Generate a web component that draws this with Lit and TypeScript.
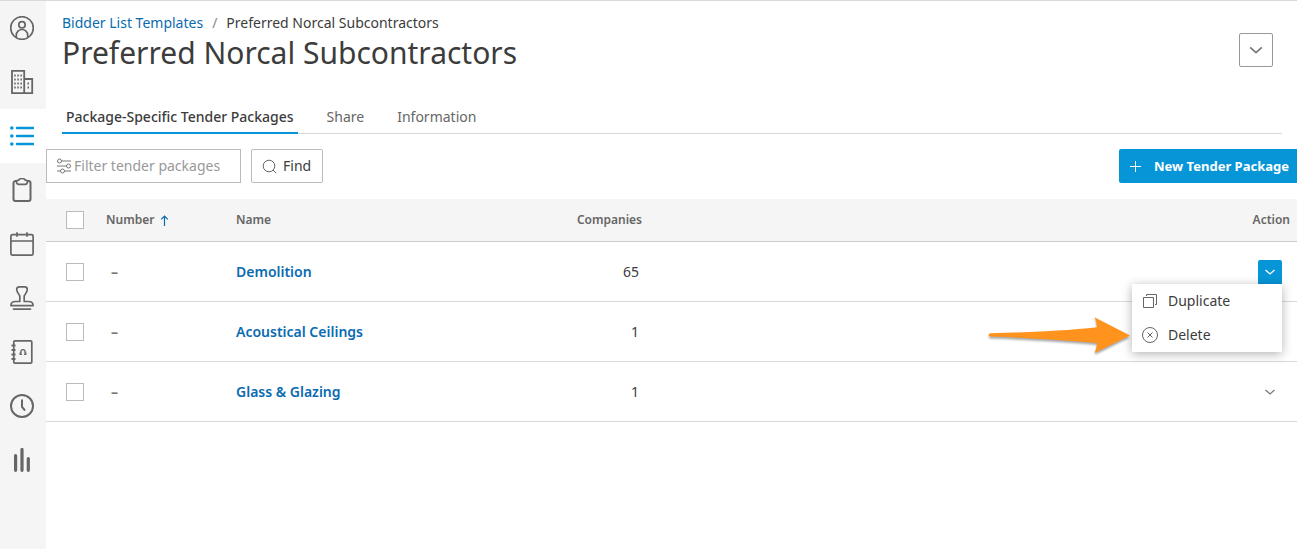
import { LitElement, html, css, svg, nothing } from "lit";
import { customElement, property, state } from "lit/decorators.js";
import { classMap } from "lit/directives/class-map.js";

interface TenderPackage {
  number: string;
  name: string;
  companies: number;
}

const navItems = [
  {
    label: "Account",
    icon: svg`<circle cx="12" cy="12" r="11.3"/><circle cx="12" cy="8.8" r="3.2"/><path d="M6.3 21.5v-2.3a5.7 5.7 0 0 1 11.4 0v2.3"/>`,
  },
  {
    label: "Companies",
    icon: svg`<path d="M2 .8h12.2v22.4H2zM14.2 9h8v14.2h-8" stroke-width="1.8"/><path d="M4.200 5.500h1.500M7.300 5.500h1.500M10.400 5.500h1.500M4.200 9.500h1.500M7.300 9.500h1.500M10.400 9.500h1.500M4.200 13.500h1.500M7.300 13.500h1.500M10.400 13.500h1.500M4.200 17.500h1.500M7.300 17.500h1.500M10.400 17.500h1.500M17.500 13.500H19M17.500 17.500H19" stroke-width="1.800"/>`,
  },
  {
    label: "Bidder lists",
    icon: svg`<path d="M7 4h16M7 12h16M7 20h16" stroke-width="2.600" stroke-linecap="round"/><g fill="currentColor" stroke="none"><circle cx="1.8" cy="4" r="1.800"/><circle cx="1.8" cy="12" r="1.800"/><circle cx="1.8" cy="20" r="1.800"/></g>`,
  },
  {
    label: "Projects",
    icon: svg`<path d="M7 3H5.500a2 2 0 0 0-2 2v16a2 2 0 0 0 2 2h13a2 2 0 0 0 2-2V5a2 2 0 0 0-2-2H17" stroke-width="2"/><path d="M6.500 3.800c0-1.200 1-1.600 2.200-1.600C9.500.6 10.500.5 12 .5s2.500.1 3.300 1.700c1.200 0 2.200.4 2.200 1.600 0 1.600-.8 2.500-2.300 2.500H8.800c-1.500 0-2.300-.9-2.300-2.500z"/>`,
  },
  {
    label: "Calendar",
    icon: svg`<rect x=".9" y="2.600" width="22.200" height="20.500" rx="1.500"/><path d="M1 9h22M7 .3v4.500M17 .3v4.500"/>`,
  },
  {
    label: "Approvals",
    icon: svg`<path d="M9.800 15.500V10C8.500 7.600 6.700 5.500 6.700 3.400c0-1.700 1.200-2.500 2.600-2.500h5.400c1.400 0 2.600.8 2.600 2.500 0 2.100-1.800 4.200-3.100 6.600v5.500h4.300c3 0 4.600 1.500 4.600 4.100H.9c0-2.600 1.600-4.100 4.600-4.100z" stroke-linejoin="round"/><path d="M3.500 23.100h17" stroke-linecap="round"/>`,
  },
  {
    label: "Contacts",
    icon: svg`<rect x="3.800" y=".9" width="18" height="22.200" rx="1"/><path d="M1.500 5.500h4M1.500 10h4M1.500 14.500h4M1.500 19h4" stroke-width="2"/><path d="M11.200 13c-1.800-4.500 5.400-4.500 3.600 0M9.600 14.200h2.400M14 14.200h2.400M10.200 14v-1.600M15.800 14v-1.600" stroke-width="1.400"/>`,
  },
  {
    label: "History",
    icon: svg`<circle cx="12" cy="12" r="11" stroke-width="2"/><path d="M12 5.500V13l3 3.500" stroke-width="2"/>`,
  },
  {
    label: "Reports",
    icon: svg`<path d="M5.600 7.500v14.800M12 1.500v20.800M18.300 10.500v11.800" stroke-width="3.200" stroke-linecap="round"/>`,
  },
];

const chevron = (size: number) => html`<svg width=${size} height=${size} viewBox="0 0 14 14" fill="none" stroke="currentColor" stroke-width="1.300" aria-hidden="true">
  <path d="M2.500 5 7 9l4.500-4"/>
</svg>`;

@customElement("side-nav")
class SideNav extends LitElement {
  @property() current = "";

  static styles = css`
    :host {
      display: block;
      background: #f5f5f5;
    }
    .item {
      display: flex;
      align-items: center;
      height: 54px;
      padding-left: 10px;
      color: #666;
    }
    .active {
      background: #fff;
      color: #0696d7;
    }
  `;

  render() {
    return html`<nav aria-label="Main">
      ${navItems.map(
        (item) => html`<a href="#" class=${classMap({ item: true, active: item.label === this.current })} aria-label=${item.label}>
          <svg width="24" height="24" viewBox="0 0 24 24" fill="none" stroke="currentColor" stroke-width="1.700" aria-hidden="true">${item.icon}</svg>
        </a>`
      )}
    </nav>`;
  }
}

@customElement("action-menu")
class ActionMenu extends LitElement {
  @property({ type: Boolean }) open = false;

  static styles = css`
    :host {
      display: inline-block;
      position: relative;
      vertical-align: middle;
    }
    .toggle {
      display: grid;
      place-items: center;
      width: 24px;
      height: 24px;
      padding: 0;
      border: 0;
      border-radius: 2px;
      background: none;
      color: #777;
    }
    .toggle.open {
      border-radius: 2px 2px 0 0;
      background: #0696d7;
      color: #fff;
    }
    .menu {
      position: absolute;
      z-index: 2;
      top: 100%;
      right: 0;
      width: 150px;
      background: #fff;
      box-shadow: 0 2px 10px rgba(0, 0, 0, 0.3);
    }
    .option {
      display: flex;
      align-items: center;
      gap: 10px;
      width: 100%;
      height: 34px;
      padding: 0 10px;
      border: 0;
      background: none;
      color: #3c3c3c;
      font: inherit;
    }
    .option-icon {
      color: #666;
    }
    .arrow {
      position: absolute;
      top: 31px;
      right: 100%;
      width: 146px;
      height: 40px;
      filter: drop-shadow(0 2px 1px rgba(0, 0, 0, 0.35));
    }
  `;

  render() {
    return html`<button
        class=${classMap({ toggle: true, open: this.open })}
        aria-label="Package actions"
        aria-expanded=${this.open}
        @click=${() => (this.open = !this.open)}
      >
        ${chevron(14)}
      </button>
      ${this.open
        ? html`<div class="menu">
            <button class="option">
              <svg class="option-icon" width="16" height="16" viewBox="0 0 16 16" fill="none" stroke="currentColor" aria-hidden="true">
                <path d="M1.500 4.500h10v10h-10zM4.500 3V1.500h10v10H13"/>
              </svg>
              Duplicate
            </button>
            <button class="option">
              <svg class="option-icon" width="16" height="16" viewBox="0 0 16 16" fill="none" stroke="currentColor" aria-hidden="true">
                <circle cx="8" cy="8" r="7.500"/><path d="m5.500 5.500 5 5M10.500 5.500l-5 5"/>
              </svg>
              Delete
            </button>
            <svg class="arrow" viewBox="0 0 146 40" fill="#ff931e" aria-hidden="true">
              <path d="M4 18.200C40 17.600 82 15.500 111 12.200Q111 7 108.500 2.200L144 20.500 108.500 38Q111 33 111 28C82 25.500 42 22.800 4 21.600Q1 20 4 18.200z"/>
            </svg>
          </div>`
        : nothing}`;
  }
}

@customElement("app-root")
class AppRoot extends LitElement {
  @state() private tab = "Package-Specific Tender Packages";

  private tabs = ["Package-Specific Tender Packages", "Share", "Information"];

  private packages: TenderPackage[] = [
    { number: "–", name: "Demolition", companies: 65 },
    { number: "–", name: "Acoustical Ceilings", companies: 1 },
    { number: "–", name: "Glass & Glazing", companies: 1 },
  ];

  static styles = css`
    :host {
      display: grid;
      grid-template-columns: 46px minmax(0, 1fr);
      box-sizing: border-box;
      min-height: 100vh;
      border-top: 1px solid #d9d9d9;
      background: #fff;
      color: #3c3c3c;
      font: 14px/20px "Noto Sans", "Open Sans", sans-serif;
    }
    a {
      color: #0a6bb0;
      text-decoration: none;
    }
    button,
    input {
      font: inherit;
    }
    .header {
      display: flex;
      justify-content: space-between;
      align-items: center;
      padding: 12px 24px 0 16px;
    }
    .crumbs {
      display: flex;
      gap: 9px;
    }
    .slash {
      color: #888;
    }
    .title {
      margin: 0;
      font-size: 30px;
      font-weight: 400;
      line-height: 40px;
    }
    .more {
      display: grid;
      place-items: center;
      width: 34px;
      height: 34px;
      margin-top: 14px;
      padding: 0;
      border: 1px solid #999;
      border-radius: 2px;
      background: #fff;
      color: #777;
    }
    .tabs {
      display: flex;
      gap: 25px;
      margin: 27px 15px 0 16px;
      border-bottom: 1px solid #d9d9d9;
    }
    .tab {
      height: 34px;
      margin-bottom: -1px;
      padding: 2px 4px 0;
      border: 0;
      border-bottom: 2px solid transparent;
      background: none;
      color: #666;
    }
    .tab.selected {
      border-bottom-color: #0696d7;
      color: #3c3c3c;
      font-weight: 550;
    }
    .toolbar {
      display: flex;
      gap: 10px;
      padding: 15px 0 16px;
    }
    .filter {
      display: flex;
      align-items: center;
      gap: 3px;
      box-sizing: border-box;
      width: 195px;
      height: 34px;
      padding: 0 10px;
      border: 1px solid #bbb;
      color: #777;
    }
    .filter-input {
      flex: 1;
      min-width: 0;
      padding: 0;
      border: 0;
      outline: 0;
      background: none;
      color: #3c3c3c;
    }
    .filter-input::placeholder {
      color: #999;
    }
    .button {
      display: flex;
      align-items: center;
      height: 34px;
      border-radius: 2px;
    }
    .find {
      gap: 6px;
      padding: 0 11px 0 10px;
      border: 1px solid #bbb;
      background: #fff;
      color: #3c3c3c;
    }
    .find-icon {
      color: #666;
    }
    .create {
      gap: 12px;
      margin-left: auto;
      padding: 0 8px 0 10px;
      border: 0;
      border-radius: 2px 0 0 2px;
      background: #0696d7;
      color: #fff;
      font-size: 13px;
      font-weight: 700;
    }
    .packages {
      width: 100%;
      table-layout: fixed;
      border-collapse: separate;
      border-spacing: 0;
    }
    .packages th,
    .packages td {
      box-sizing: border-box;
      padding: 0;
      text-align: left;
    }
    .packages th {
      height: 43px;
      border-bottom: 1px solid #ccc;
      background: #f5f5f5;
      color: #666;
      font-size: 12px;
      font-weight: 600;
    }
    .packages td {
      height: 60px;
      border-bottom: 1px solid #d9d9d9;
    }
    .packages .col-check {
      width: 60px;
      padding-left: 20px;
    }
    .packages .col-number {
      width: 130px;
    }
    .packages td.col-number {
      padding-left: 5px;
      color: #777;
      font-weight: 700;
    }
    .packages .col-name {
      width: 250px;
    }
    .packages .col-companies {
      width: 156px;
      padding-right: 3px;
      text-align: right;
    }
    .packages th.col-companies {
      padding-right: 0;
    }
    .packages .col-action {
      padding-right: 15px;
      text-align: right;
    }
    .packages th.col-action {
      padding-right: 7px;
    }
    .check {
      display: block;
      appearance: none;
      width: 18px;
      height: 18px;
      margin: 0;
      border: 1px solid #bbb;
      background: #fff;
    }
    .sort {
      display: flex;
      align-items: center;
      gap: 6px;
      padding: 0;
      border: 0;
      background: none;
      color: inherit;
    }
    .sort-icon {
      color: #0a6bb0;
    }
    .name {
      font-weight: 600;
    }
  `;

  render() {
    return html`
      <side-nav current="Bidder lists"></side-nav>
      <main>
        <header class="header">
          <div>
            <nav class="crumbs" aria-label="Breadcrumb">
              <a href="#">Bidder List Templates</a>
              <span class="slash">/</span>
              <span>Preferred Norcal Subcontractors</span>
            </nav>
            <h1 class="title">Preferred Norcal Subcontractors</h1>
          </div>
          <button class="more" aria-label="More actions">${chevron(18)}</button>
        </header>
        <div class="tabs" role="tablist">
          ${this.tabs.map(
            (name) => html`<button
              role="tab"
              class=${classMap({ tab: true, selected: name === this.tab })}
              aria-selected=${name === this.tab}
              @click=${() => (this.tab = name)}
            >${name}</button>`
          )}
        </div>
        <div class="toolbar">
          <label class="filter">
            <svg width="14" height="16" viewBox="0 0 14 16" fill="none" stroke="currentColor" aria-hidden="true">
              <path d="M4.500 3H14M0 8h9.500M13.500 8h.5M0 13h3.500M7.500 13H14M0 3h.5"/>
              <circle cx="2.500" cy="3" r="2"/><circle cx="11.500" cy="8" r="2"/><circle cx="5.500" cy="13" r="2"/>
            </svg>
            <input class="filter-input" type="text" aria-label="Filter tender packages" placeholder="Filter tender packages" />
          </label>
          <button class="button find">
            <svg class="find-icon" width="15" height="15" viewBox="0 0 15 15" fill="none" stroke="currentColor" aria-hidden="true">
              <circle cx="7" cy="7" r="5.800"/><path d="m11 11 3.200 3.200"/>
            </svg>
            Find
          </button>
          <button class="button create">
            <svg width="13" height="13" viewBox="0 0 13 13" fill="none" stroke="currentColor" aria-hidden="true">
              <path d="M6.500 1v11M1 6.500h11"/>
            </svg>
            New Tender Package
          </button>
        </div>
        <table class="packages">
          <thead>
            <tr>
              <th class="col-check"><input class="check" type="checkbox" aria-label="Select all packages" /></th>
              <th class="col-number">
                <button class="sort">
                  Number
                  <svg class="sort-icon" width="9" height="11" viewBox="0 0 9 11" fill="none" stroke="currentColor" stroke-width="1.200" aria-hidden="true">
                    <path d="M4.500 11V1M1.200 4.300 4.500 1l3.300 3.300"/>
                  </svg>
                </button>
              </th>
              <th class="col-name">Name</th>
              <th class="col-companies">Companies</th>
              <th class="col-action">Action</th>
            </tr>
          </thead>
          <tbody>
            ${this.packages.map(
              (item, index) => html`<tr>
                <td class="col-check"><input class="check" type="checkbox" aria-label=${`Select ${item.name}`} /></td>
                <td class="col-number">${item.number}</td>
                <td class="col-name"><a class="name" href="#">${item.name}</a></td>
                <td class="col-companies">${item.companies}</td>
                <td class="col-action"><action-menu ?open=${index === 0}></action-menu></td>
              </tr>`
            )}
          </tbody>
        </table>
      </main>
    `;
  }
}
